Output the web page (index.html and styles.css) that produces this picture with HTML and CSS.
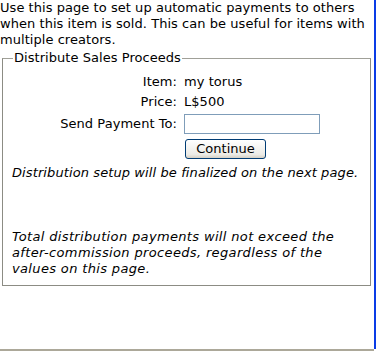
FILE: index.html
```html
<!DOCTYPE html>
<html lang="en">

<head>
    <meta charset="UTF-8">
    <title>Distribute Sales Proceeds</title>
    <link rel="stylesheet" href="styles.css">
</head>

<body>
    <div class="frame">
        <div class="page">
            <p class="intro">Use this page to set up automatic payments to others when this item is sold. This can be useful for items with multiple creators.</p>

            <fieldset class="box">
                <legend>Distribute Sales Proceeds</legend>
                <div class="form-grid">
                    <span class="label">Item:</span>
                    <span class="value">my torus</span>
                    <span class="label">Price:</span>
                    <span class="value">L$500</span>
                    <span class="label">Send Payment To:</span>
                    <input type="text" class="name-input">
                    <span></span>
                    <button class="continue">Continue</button>
                </div>
                <p class="note">Distribution setup will be finalized on the next page.</p>
                <p class="note note-last">Total distribution payments will not exceed the after-commission proceeds, regardless of the values on this page.</p>
            </fieldset>
        </div>
        <div class="edge"></div>
    </div>
</body>

</html>
```

FILE: styles.css
```css
* {
    box-sizing: border-box;
}

body {
    margin: 0;
    padding: 0;
    background: #ffffff;
    font-family: Verdana, "DejaVu Sans", sans-serif;
    font-size: 13px;
    line-height: 16px;
    letter-spacing: 0.05px;
    color: #000000;
}

.frame {
    display: flex;
    height: 351px;
}

.page {
    width: 374px;
    border-bottom: 2px solid #aca899;
}

.edge {
    width: 2px;
    height: 349px;
    background: #0a3ce6;
}

.intro {
    margin: 0 0 2px 0;
}

.box {
    margin: 0 3px 0 2px;
    padding: 8px 9px 8px 9px;
    border: 1px solid #8c8c84;
    border-top-color: #a0a098;
}

.box legend {
    padding: 0 1px;
    margin-left: 1px;
}

.form-grid {
    display: grid;
    grid-template-columns: 165px auto;
    column-gap: 7px;
    row-gap: 4px;
    align-items: center;
    justify-items: start;
}

.form-grid .label {
    justify-self: end;
}

.name-input {
    width: 136px;
    height: 20px;
    margin: 0;
    border: 1px solid #7f9db9;
    font: inherit;
}

.continue {
    width: 81px;
    height: 20px;
    margin: 1px 0 0 1px;
    padding: 0;
    font: inherit;
    border: 1px solid #003c74;
    border-radius: 3px;
    background: linear-gradient(#ffffff, #ecebe6 80%, #d6d0c5);
}

.note {
    margin: 6px 0 48px 0;
    font-style: italic;
    letter-spacing: 0.1px;
}

.note-last {
    margin: 0;
    letter-spacing: 0.35px;
}
```
